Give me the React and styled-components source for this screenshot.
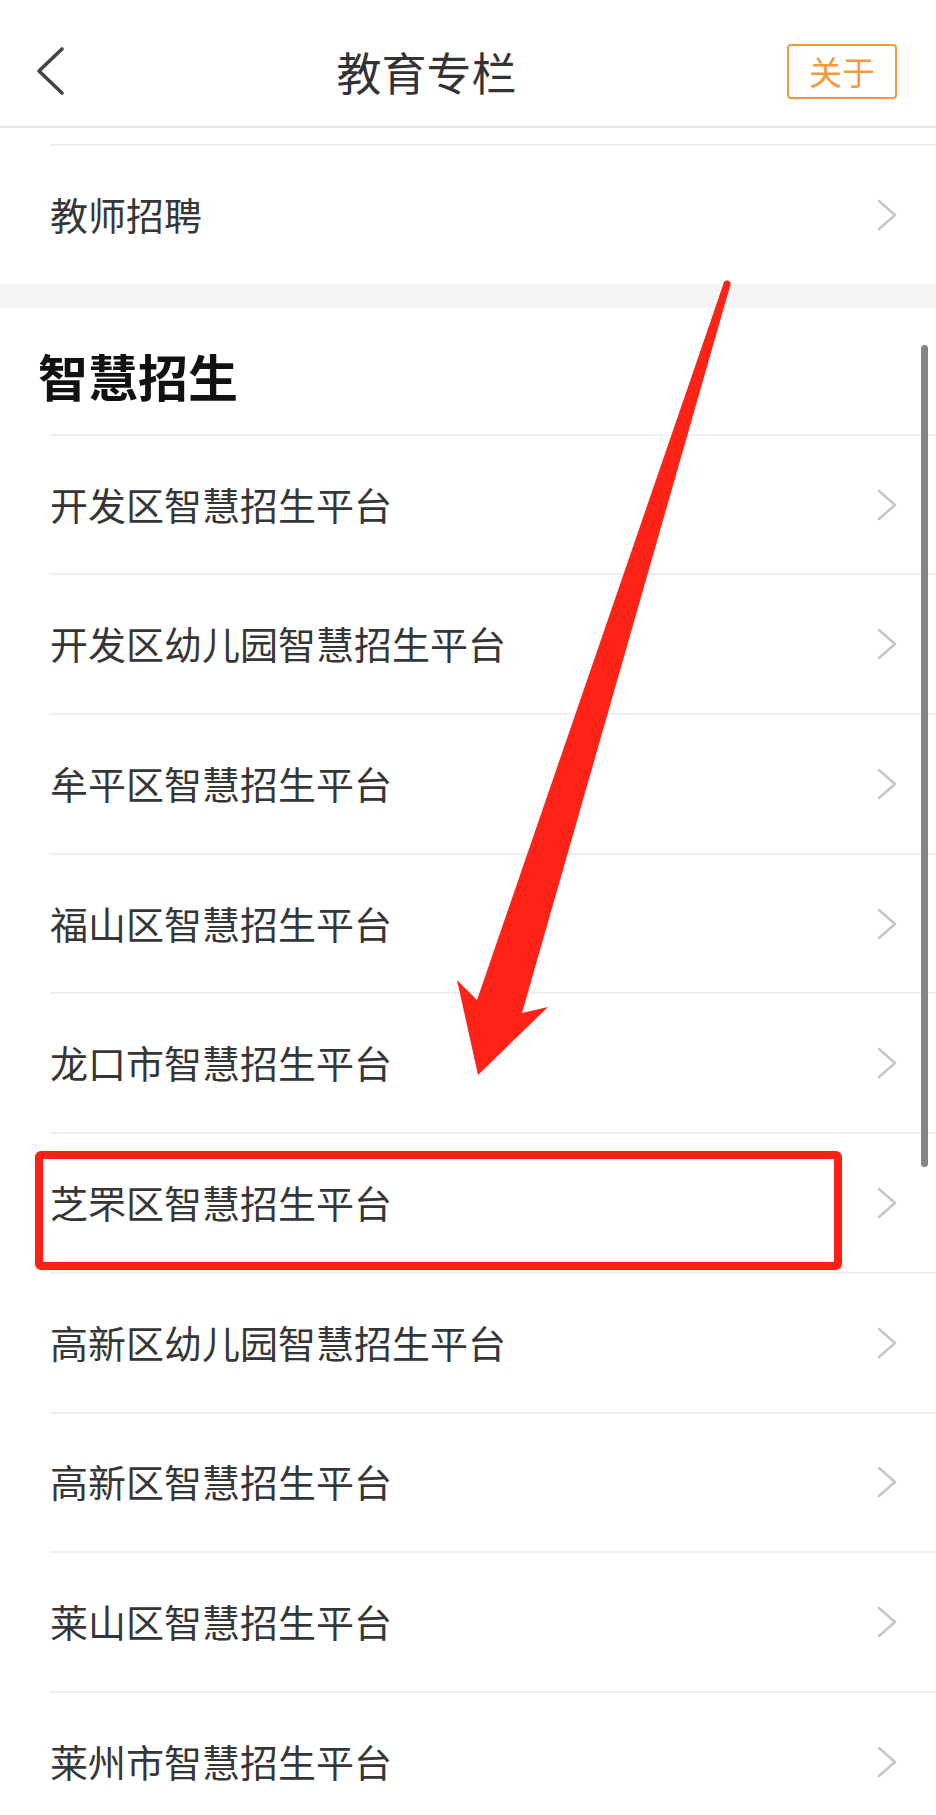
import React from "react";
import styled, { createGlobalStyle } from "styled-components";

const GlobalStyle = createGlobalStyle`
  html, body {
    margin: 0;
    padding: 0;
    background: #ffffff;
  }
  body {
    font-family: "Noto Sans CJK SC", "Noto Sans", sans-serif;
  }
  * { box-sizing: border-box; }
`;

const Page = styled.div`
  position: relative;
  width: 936px;
  height: 1815px;
  overflow: hidden;
  background: #ffffff;
`;

const Header = styled.header`
  display: flex;
  align-items: center;
  justify-content: space-between;
  height: 128px;
  padding: 16px 39px 0 35px;
  border-bottom: 2px solid #e8e8e8;
`;

const BackButton = styled.button`
  display: flex;
  align-items: center;
  justify-content: center;
  width: 31px;
  height: 50px;
  padding: 0;
  border: none;
  background: none;
`;

const Title = styled.h1`
  margin: 0;
  font-size: 45px;
  font-weight: 400;
  line-height: 1;
  color: #333333;
`;

const AboutButton = styled.button`
  display: flex;
  align-items: center;
  justify-content: center;
  width: 110px;
  height: 55px;
  padding: 0;
  border: 2px solid #f39a3d;
  border-radius: 4px;
  background: #ffffff;
  color: #f39a3d;
  font-family: "Noto Sans CJK SC", sans-serif;
  font-size: 33px;
  line-height: 1;
`;

const List = styled.div`
  display: flex;
  flex-direction: column;
  background: #ffffff;
`;

const TopSpacer = styled.div`
  height: 16px;
`;

const Row = styled.div`
  display: flex;
  align-items: center;
  justify-content: space-between;
  height: 139.7px;
  margin-left: 50px;
  padding-right: 39px;
  border-top: 2px solid #efefef;
`;

const RowText = styled.span`
  font-size: 38px;
  line-height: 1;
  color: #363636;
  margin-top: -2px;
`;

const GrayBand = styled.div`
  height: 24px;
  background: #f4f4f4;
`;

const SectionTitle = styled.h2`
  display: flex;
  align-items: center;
  height: 126px;
  margin: 0;
  padding: 8px 0 0 38px;
  font-size: 50px;
  font-weight: 700;
  line-height: 1;
  color: #111111;
`;

const Scrollbar = styled.div`
  position: absolute;
  left: 921px;
  top: 345px;
  width: 7px;
  height: 822px;
  border-radius: 4px;
  background: #858585;
`;

const Highlight = styled.div`
  position: absolute;
  left: 35px;
  top: 1151px;
  width: 807px;
  height: 119px;
  border: 8px solid #ff2014;
  border-radius: 6px;
`;

const Overlay = styled.svg`
  position: absolute;
  left: 0;
  top: 0;
  width: 936px;
  height: 1815px;
  pointer-events: none;
`;

const Chevron = () => (
  <svg width="20" height="32" viewBox="0 0 20 32" fill="none">
    <path d="M2 2 L18 16 L2 30" stroke="#c6c6c6" strokeWidth="2.5" strokeLinecap="round" strokeLinejoin="round" />
  </svg>
);

const BackIcon = () => (
  <svg width="31" height="50" viewBox="0 0 31 50" fill="none">
    <path d="M27 3 L4 25 L27 47" stroke="#444444" strokeWidth="3.6" strokeLinecap="round" strokeLinejoin="round" />
  </svg>
);

const items = [
  "开发区智慧招生平台",
  "开发区幼儿园智慧招生平台",
  "牟平区智慧招生平台",
  "福山区智慧招生平台",
  "龙口市智慧招生平台",
  "芝罘区智慧招生平台",
  "高新区幼儿园智慧招生平台",
  "高新区智慧招生平台",
  "莱山区智慧招生平台",
  "莱州市智慧招生平台",
];

export default function App() {
  return (
    <>
      <GlobalStyle />
      <Page>
        <Header>
          <BackButton aria-label="返回">
            <BackIcon />
          </BackButton>
          <Title>教育专栏</Title>
          <AboutButton>关于</AboutButton>
        </Header>
        <List>
          <TopSpacer />
          <Row>
            <RowText>教师招聘</RowText>
            <Chevron />
          </Row>
        </List>
        <GrayBand />
        <List>
          <SectionTitle>智慧招生</SectionTitle>
          {items.map((t) => (
            <Row key={t}>
              <RowText>{t}</RowText>
              <Chevron />
            </Row>
          ))}
        </List>
        <Scrollbar />
        <Highlight />
        <Overlay viewBox="0 0 936 1815">
          <circle cx="727" cy="284" r="3.6" fill="#ff2216" />
          <polygon
            points="730.6,284 522,1013 548,1007 478,1075 457,980 477,1000 723.4,284"
            fill="#ff2216"
          />
        </Overlay>
      </Page>
    </>
  );
}
